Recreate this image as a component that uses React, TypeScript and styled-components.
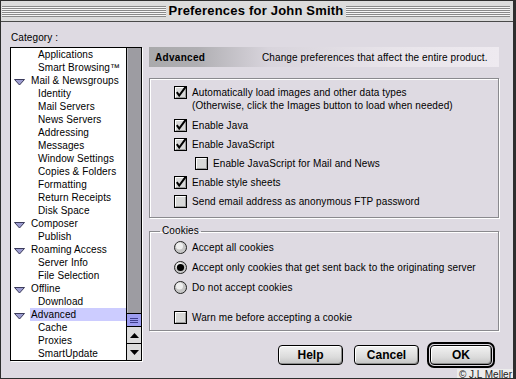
import styled, { createGlobalStyle } from "styled-components";

const GlobalStyle = createGlobalStyle`
  html, body {
    margin: 0;
    padding: 0;
    background: #dedae2;
  }
  body {
    font-family: "Liberation Sans", Arial, sans-serif;
    font-size: 10px;
    letter-spacing: 0.1px;
    color: #000;
  }
`;

const Window = styled.div`
  position: relative;
  width: 516px;
  height: 379px;
  box-sizing: border-box;
  border: 1px solid #2e2e2e;
  border-right-width: 3px;
  background: #dedae2;
  display: flex;
  flex-direction: column;
  overflow: hidden;
`;

const TitleBar = styled.div`
  height: 20px;
  flex: none;
  display: flex;
  align-items: center;
  gap: 3px;
  padding: 0 3px 0 1px;
  background: #dcdcdc;
  border-bottom: 1px solid #4a4a4a;
`;

const Stripes = styled.div`
  flex: 1;
  height: 11px;
  background: repeating-linear-gradient(
    180deg,
    #8a8a8a 0 1px,
    #f6f6f6 1px 2px
  );
`;

const Title = styled.div`
  font-size: 13px;
  font-weight: bold;
  line-height: 20px;
  letter-spacing: 0.2px;
`;

const Body = styled.div`
  display: grid;
  grid-template-columns: 132px 350px;
  grid-template-rows: 16px auto;
  column-gap: 7px;
  padding: 9px 0 0 9px;
`;

const Label = styled.div`
  line-height: 14px;
  padding-left: 1px;
`;

const ListBox = styled.div`
  grid-row: 2;
  height: 314px;
  box-sizing: border-box;
  border: 1px solid #000;
  display: flex;
  box-shadow: 1px 1px 0 #fff;
`;

const Items = styled.div`
  flex: 1;
  background: #fff;
  overflow: hidden;
  display: flex;
  flex-direction: column;
`;

const Row = styled.div<{ $child?: boolean }>`
  height: 13px;
  flex: none;
  display: flex;
  align-items: center;
  gap: 5px;
  padding-left: ${(p) => (p.$child ? "26px" : "3px")};
  line-height: 13px;
  white-space: nowrap;
`;

const RowText = styled.span<{ $selected?: boolean }>`
  flex: 1;
  height: 13px;
  padding-left: 1px;
  background: ${(p) => (p.$selected ? "#ccccff" : "transparent")};
`;

const Twisty = styled.svg`
  flex: none;
  width: 11px;
  height: 7px;
  margin-top: 4px;
`;

const ScrollBar = styled.div`
  width: 14px;
  border-left: 1px solid #000;
  display: flex;
  flex-direction: column;
`;

const Track = styled.div`
  flex: 1;
  background: #9d9ca2;
  box-shadow: inset 1px 0 0 #bdbcc2;
  display: flex;
  flex-direction: column;
  justify-content: flex-end;
`;

const Thumb = styled.div`
  height: 12px;
  background: #9c9cf0;
  border-top: 1px solid #000;
  display: flex;
  flex-direction: column;
  justify-content: center;
  gap: 1px;
  padding: 0 3px;
`;

const Grip = styled.div`
  height: 1px;
  background: #3e3e8c;
`;

const Arrow = styled.div`
  height: 16px;
  flex: none;
  border-top: 1px solid #000;
  background: #dcdcdc;
  display: flex;
  align-items: center;
  justify-content: center;
`;

const Right = styled.div`
  grid-row: 2;
  grid-column: 2;
  display: flex;
  flex-direction: column;
`;

const Header = styled.div`
  height: 20px;
  display: flex;
  align-items: center;
  background: linear-gradient(
    90deg,
    #a9a9ab 0,
    #b0afb3 14%,
    #d8d4dc 34%,
    #e8e4ea 70%,
    #eeeaf0 100%
  );
`;

const HeaderTitle = styled.span`
  width: 107px;
  padding-left: 6px;
  font-weight: bold;
  letter-spacing: 0.3px;
`;

const Group = styled.div`
  height: 140px;
  box-sizing: border-box;
  margin-top: 11px;
  border: 1px solid #8a8a8e;
  box-shadow: 1px 1px 0 #fff, inset 1px 1px 0 #fff;
  padding: 7px 0 0 24px;
  display: flex;
  flex-direction: column;
  gap: 6px;
`;

const Fieldset = styled.fieldset`
  margin: 7px 0 0 0;
  padding: 4px 0 6px 10px;
  min-inline-size: 0;
  border: 1px solid #8a8a8e;
  box-shadow: 1px 1px 0 #fff, inset 1px 1px 0 #fff;
`;

const Legend = styled.legend`
  padding: 0 2px;
  line-height: 12px;
`;

const Options = styled.div`
  padding-left: 14px;
  display: flex;
  flex-direction: column;
  gap: 7px;
`;

const Option = styled.div<{ $indent?: number; $space?: number }>`
  display: flex;
  align-items: flex-start;
  gap: 5px;
  line-height: 13px;
  padding-left: ${(p) => p.$indent ?? 0}px;
  margin-top: ${(p) => p.$space ?? 0}px;
`;

const Note = styled.div`
  line-height: 14px;
`;

const Buttons = styled.div`
  margin-top: 11px;
  height: 26px;
  display: flex;
  align-items: center;
  justify-content: flex-end;
  padding-right: 4px;
`;

const Button = styled.button`
  width: 65px;
  height: 20px;
  box-sizing: border-box;
  border: 1px solid #000;
  border-radius: 4px;
  background: linear-gradient(180deg, #f2f2f2 0, #dcdcdc 60%, #c4c4c4 100%);
  box-shadow: inset 1px 1px 0 #fff, inset -1px -1px 0 #8c8c8c;
  font-family: "Liberation Sans", Arial, sans-serif;
  font-size: 12px;
  font-weight: bold;
  color: #000;
  padding: 0;
  margin-left: 11px;
`;

const DefaultRing = styled.div`
  margin-left: 8px;
  border: 2px solid #000;
  border-radius: 7px;
  padding: 1px;
  display: flex;
  background: #dedae2;

  ${Button} {
    margin-left: 0;
    width: 62px;
  }
`;

const Credit = styled.div`
  position: absolute;
  right: 0;
  bottom: -2px;
  padding: 0 1px 0 2px;
  background: #ececec;
  font-size: 10px;
  line-height: 11px;
  letter-spacing: 0;
  color: #222;
`;

function CheckBox({ checked }: { checked?: boolean }) {
  return (
    <svg width="13" height="13" viewBox="0 0 13 13" style={{ flex: "none", overflow: "visible" }}>
      <rect x="0.5" y="0.5" width="12" height="12" fill="#d8d8d8" stroke="#000" />
      <path d="M1.5 11V1.5H11" fill="none" stroke="#fff" />
      <path d="M2 11.5H11.5V2" fill="none" stroke="#9a9a9a" />
      {checked && (
        <path d="M2.8 6.2 L5.2 9.6 L11.8 0.6" fill="none" stroke="#000" strokeWidth="2" />
      )}
    </svg>
  );
}

function Radio({ on }: { on?: boolean }) {
  return (
    <svg width="13" height="13" viewBox="0 0 13 13" style={{ flex: "none" }}>
      <circle cx="6.5" cy="6.5" r="6" fill="#c6c6c6" stroke="#222" />
      <circle cx="5.5" cy="5" r="3.5" fill="#eeeeee" />
      {on && <circle cx="6.5" cy="6.5" r="3.6" fill="#000" />}
    </svg>
  );
}

const tree: { text: string; child?: boolean; selected?: boolean }[] = [
  { text: "Applications", child: true },
  { text: "Smart Browsing\u2122", child: true },
  { text: "Mail & Newsgroups" },
  { text: "Identity", child: true },
  { text: "Mail Servers", child: true },
  { text: "News Servers", child: true },
  { text: "Addressing", child: true },
  { text: "Messages", child: true },
  { text: "Window Settings", child: true },
  { text: "Copies & Folders", child: true },
  { text: "Formatting", child: true },
  { text: "Return Receipts", child: true },
  { text: "Disk Space", child: true },
  { text: "Composer" },
  { text: "Publish", child: true },
  { text: "Roaming Access" },
  { text: "Server Info", child: true },
  { text: "File Selection", child: true },
  { text: "Offline" },
  { text: "Download", child: true },
  { text: "Advanced", selected: true },
  { text: "Cache", child: true },
  { text: "Proxies", child: true },
  { text: "SmartUpdate", child: true },
];

export default function App() {
  return (
    <>
      <GlobalStyle />
      <Window>
        <TitleBar>
          <Stripes />
          <Title>Preferences for John Smith</Title>
          <Stripes />
        </TitleBar>
        <Body>
          <Label>Category :</Label>
          <ListBox>
            <Items>
              {tree.map((r) => (
                <Row key={r.text} $child={r.child}>
                  {!r.child && (
                    <Twisty viewBox="0 0 11 7">
                      <polygon points="0.5,0.5 10.5,0.5 5.5,6" fill="#9c9cd0" stroke="#3a3a5a" />
                    </Twisty>
                  )}
                  <RowText $selected={r.selected}>{r.text}</RowText>
                </Row>
              ))}
            </Items>
            <ScrollBar>
              <Track>
                <Thumb>
                  <Grip />
                  <Grip />
                  <Grip />
                </Thumb>
              </Track>
              <Arrow>
                <svg width="9" height="5" viewBox="0 0 9 5">
                  <polygon points="0,5 9,5 4.5,0" fill="#000" />
                </svg>
              </Arrow>
              <Arrow>
                <svg width="9" height="5" viewBox="0 0 9 5">
                  <polygon points="0,0 9,0 4.5,5" fill="#000" />
                </svg>
              </Arrow>
            </ScrollBar>
          </ListBox>
          <Right>
            <Header>
              <HeaderTitle>Advanced</HeaderTitle>
              <span>Change preferences that affect the entire product.</span>
            </Header>
            <Group>
              <Option>
                <CheckBox checked />
                <div>
                  <div>Automatically load images and other data types</div>
                  <Note>(Otherwise, click the Images button to load when needed)</Note>
                </div>
              </Option>
              <Option>
                <CheckBox checked />
                <span>Enable Java</span>
              </Option>
              <Option>
                <CheckBox checked />
                <span>Enable JavaScript</span>
              </Option>
              <Option $indent={21}>
                <CheckBox />
                <span>Enable JavaScript for Mail and News</span>
              </Option>
              <Option>
                <CheckBox checked />
                <span>Enable style sheets</span>
              </Option>
              <Option>
                <CheckBox />
                <span>Send email address as anonymous FTP password</span>
              </Option>
            </Group>
            <Fieldset>
              <Legend>Cookies</Legend>
              <Options>
                <Option>
                  <Radio />
                  <span>Accept all cookies</span>
                </Option>
                <Option>
                  <Radio on />
                  <span>Accept only cookies that get sent back to the originating server</span>
                </Option>
                <Option>
                  <Radio />
                  <span>Do not accept cookies</span>
                </Option>
                <Option $space={10}>
                  <CheckBox />
                  <span>Warn me before accepting a cookie</span>
                </Option>
              </Options>
            </Fieldset>
            <Buttons>
              <Button>Help</Button>
              <Button>Cancel</Button>
              <DefaultRing>
                <Button>OK</Button>
              </DefaultRing>
            </Buttons>
          </Right>
        </Body>
        <Credit>© J.L Meller</Credit>
      </Window>
    </>
  );
}
